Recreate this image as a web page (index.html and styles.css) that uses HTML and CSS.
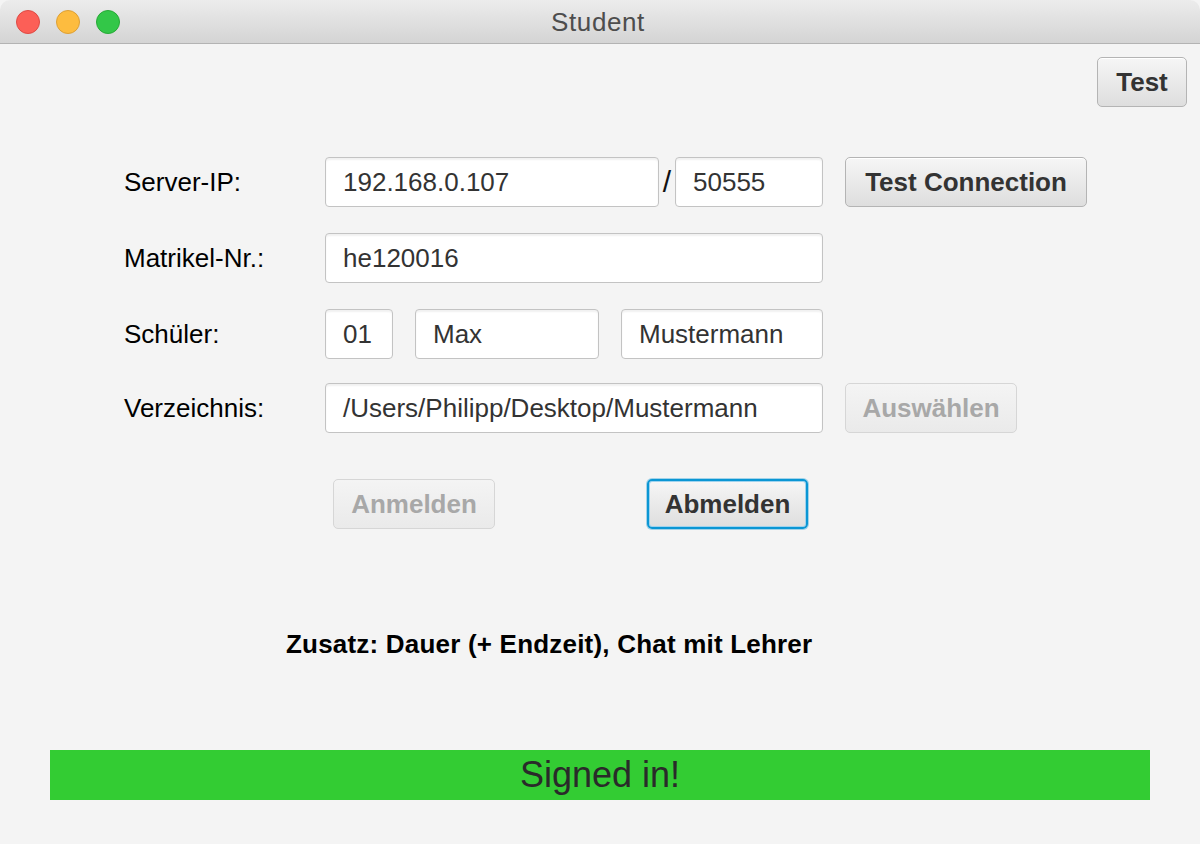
FILE: index.html
```html
<!DOCTYPE html>
<html>
<head>
<meta charset="utf-8">
<title>Student</title>
<link rel="stylesheet" href="styles.css">
</head>
<body>
<div class="window">
  <div class="titlebar">
    <div class="lights">
      <span class="light red"></span>
      <span class="light yellow"></span>
      <span class="light green"></span>
    </div>
    <div class="title">Student</div>
  </div>
  <div class="content">
    <div class="toolbar">
      <button class="btn btn-test">Test</button>
    </div>
    <div class="form">
      <div class="row">
        <div class="label">Server-IP:</div>
        <div class="field f-ip">192.168.0.107</div>
        <span class="slash">/</span>
        <div class="field f-port">50555</div>
        <button class="btn btn-connect">Test Connection</button>
      </div>
      <div class="row">
        <div class="label">Matrikel-Nr.:</div>
        <div class="field f-wide">he120016</div>
      </div>
      <div class="row">
        <div class="label">Schüler:</div>
        <div class="field f-nr">01</div>
        <div class="field f-first">Max</div>
        <div class="field f-last">Mustermann</div>
      </div>
      <div class="row row-last">
        <div class="label">Verzeichnis:</div>
        <div class="field f-wide">/Users/Philipp/Desktop/Mustermann</div>
        <button class="btn btn-choose" disabled>Auswählen</button>
      </div>
    </div>
    <div class="actions">
      <button class="btn btn-login" disabled>Anmelden</button>
      <button class="btn btn-logout focused">Abmelden</button>
    </div>
    <p class="note">Zusatz: Dauer (+ Endzeit), Chat mit Lehrer</p>
    <div class="status">Signed in!</div>
  </div>
</div>
</body>
</html>
```
FILE: styles.css
```css
html, body {
  margin: 0;
  padding: 0;
  background: #f4f4f4;
}
* { box-sizing: border-box; }

.window {
  width: 1200px;
  height: 844px;
  background: #f4f4f4;
  font-family: "Liberation Sans", Arial, sans-serif;
  overflow: hidden;
}

.titlebar {
  position: relative;
  height: 44px;
  background: linear-gradient(#ececec, #d4d4d4);
  border-bottom: 1px solid #b3b3b3;
  border-radius: 10px 10px 0 0;
  display: flex;
  align-items: center;
  justify-content: center;
}
.lights {
  position: absolute;
  left: 16px;
  top: 10px;
  display: flex;
  gap: 16px;
}
.light {
  width: 24px;
  height: 24px;
  border-radius: 50%;
  display: block;
}
.red { background: #fc5f57; border: 1px solid #de4a44; }
.yellow { background: #fdbc3f; border: 1px solid #dda035; }
.green { background: #33c748; border: 1px solid #27a936; }
.title {
  font-size: 26px;
  letter-spacing: 0.6px;
  color: #4d4d4d;
  line-height: 44px;
  padding-top: 1px;
  margin-left: -4px;
}

.content {
  display: flex;
  flex-direction: column;
}
.toolbar {
  display: flex;
  justify-content: flex-end;
  padding: 13px 13px 0 0;
}

.btn {
  font-family: "Liberation Sans", Arial, sans-serif;
  font-size: 26px;
  font-weight: bold;
  color: #333333;
  height: 50px;
  padding: 0;
  border: 1px solid #b4b4b4;
  border-radius: 5px;
  background: linear-gradient(#f6f6f6, #dedede);
  box-shadow: inset 0 1px 0 #ffffff;
  text-align: center;
}
.btn[disabled] {
  color: #a8a8a8;
  border-color: #d6d6d6;
  background: linear-gradient(#f4f4f4, #eaeaea);
  box-shadow: none;
}
.btn-test { width: 90px; }
.btn-connect { width: 242px; margin-left: 22px; }
.btn-choose { width: 172px; margin-left: 22px; }
.btn-login { width: 162px; }
.btn-logout {
  width: 161px;
  margin-left: 152px;
}
.focused {
  border: 2px solid #0a96d4;
  box-shadow: inset 0 0 0 1px #9fd3ee, 0 0 0 1px rgba(10, 150, 212, 0.35);
}

.form {
  margin-top: 50px;
  padding-left: 124px;
  display: flex;
  flex-direction: column;
  gap: 26px;
}
.row {
  display: flex;
  align-items: center;
  height: 50px;
}
.row-last { margin-top: -2px; }
.label {
  width: 201px;
  font-size: 26px;
  color: #000000;
}
.field {
  height: 50px;
  border: 1px solid #c3c3c3;
  border-radius: 4px;
  background: #ffffff;
  box-shadow: inset 0 2px 2px rgba(0, 0, 0, 0.06);
  font-size: 26px;
  line-height: 48px;
  color: #333333;
  padding-left: 17px;
  white-space: nowrap;
  overflow: hidden;
}
.f-ip { width: 334px; }
.slash {
  width: 16px;
  text-align: center;
  font-size: 30px;
  color: #111111;
}
.f-port { width: 148px; }
.f-wide { width: 498px; }
.f-nr { width: 68px; }
.f-first { width: 184px; margin-left: 22px; }
.f-last { width: 202px; margin-left: 22px; }

.actions {
  display: flex;
  align-items: center;
  margin-top: 46px;
  padding-left: 333px;
}

.note {
  margin: 100px 0 0 286px;
  font-size: 26px;
  font-weight: bold;
  letter-spacing: 0.2px;
  line-height: 30px;
  color: #000000;
}

.status {
  margin: 91px 50px 0 50px;
  height: 50px;
  background: #33cc33;
  color: #2a2a2a;
  font-size: 36px;
  line-height: 50px;
  text-align: center;
}
```
